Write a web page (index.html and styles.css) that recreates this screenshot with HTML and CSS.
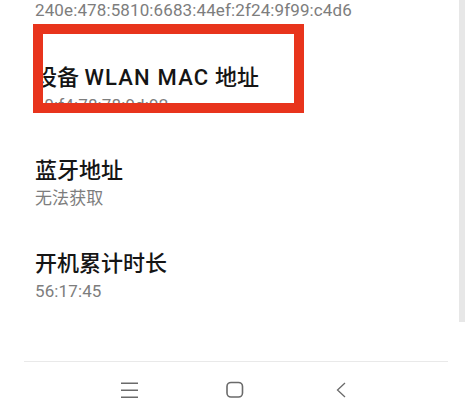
FILE: index.html
```html
<!DOCTYPE html>
<html lang="zh-CN">
<head>
<meta charset="utf-8">
<title>设备信息</title>
<link rel="stylesheet" href="styles.css">
</head>
<body>
<div class="screen">
  <div class="list">
    <div class="value value-top">240e:478:5810:6683:44ef:2f24:9f99:c4d6</div>
    <div class="item item-first">
      <div class="title">设备 <span class="latin">WLAN MAC</span> 地址</div>
      <div class="value">a0:f4:78:78:9d:92</div>
    </div>
    <div class="item">
      <div class="title">蓝牙地址</div>
      <div class="value">无法获取</div>
    </div>
    <div class="item">
      <div class="title">开机累计时长</div>
      <div class="value">56:17:45</div>
    </div>
  </div>
  <div class="spacer"></div>
  <div class="divider"></div>
  <nav class="navbar">
    <svg class="nav-icon" width="20" height="20" viewBox="0 0 20 20" aria-label="菜单">
      <path d="M2 3.3H19M2 10.3H19M2 17.3H19" stroke="#6a6a6a" stroke-width="1.4" fill="none"/>
    </svg>
    <svg class="nav-icon" width="20" height="20" viewBox="0 0 20 20" aria-label="主页">
      <rect x="2" y="2.5" width="15.5" height="14.5" rx="4" ry="4" stroke="#6a6a6a" stroke-width="1.6" fill="none"/>
    </svg>
    <svg class="nav-icon" width="20" height="20" viewBox="0 0 20 20" aria-label="返回">
      <path d="M14 3L6.5 10L14 17" stroke="#6a6a6a" stroke-width="1.3" fill="none" stroke-linejoin="miter"/>
    </svg>
  </nav>
  <div class="highlight"></div>
  <div class="scroll-track"></div>
</div>
</body>
</html>
```

FILE: styles.css
```css
html, body {
  margin: 0;
  padding: 0;
  background: #ffffff;
}

.screen {
  position: relative;
  width: 465px;
  height: 418px;
  overflow: hidden;
  display: flex;
  flex-direction: column;
  background: #ffffff;
  font-family: Roboto, "Noto Sans CJK SC", sans-serif;
}

.list {
  padding-left: 35px;
  display: flex;
  flex-direction: column;
}

.value {
  font-size: 17px;
  line-height: 22px;
  letter-spacing: 0.12px;
  color: #7d7d7d;
  margin-top: 2px;
}

.value-top {
  margin-top: -1px;
}

.item {
  padding-top: 41px;
}

.item-first {
  padding-top: 43px;
}

.title {
  font-size: 22px;
  line-height: 28px;
  font-weight: 500;
  color: #151515;
}

.latin {
  letter-spacing: 1.2px;
}

.spacer {
  flex: 1;
}

.divider {
  height: 1px;
  margin: 0 17px 0 24px;
  background: #e9e9e9;
}

.navbar {
  height: 56px;
  display: flex;
  align-items: center;
  justify-content: center;
  gap: 86px;
  padding-left: 5px;
}

.nav-icon {
  display: block;
}

.highlight {
  position: absolute;
  left: 33px;
  top: 24px;
  width: 251px;
  height: 69px;
  border: 10px solid #e8341c;
}

.scroll-track {
  position: absolute;
  right: 0;
  top: 0;
  width: 6px;
  height: 322px;
  background: #e7e7e7;
}
```
